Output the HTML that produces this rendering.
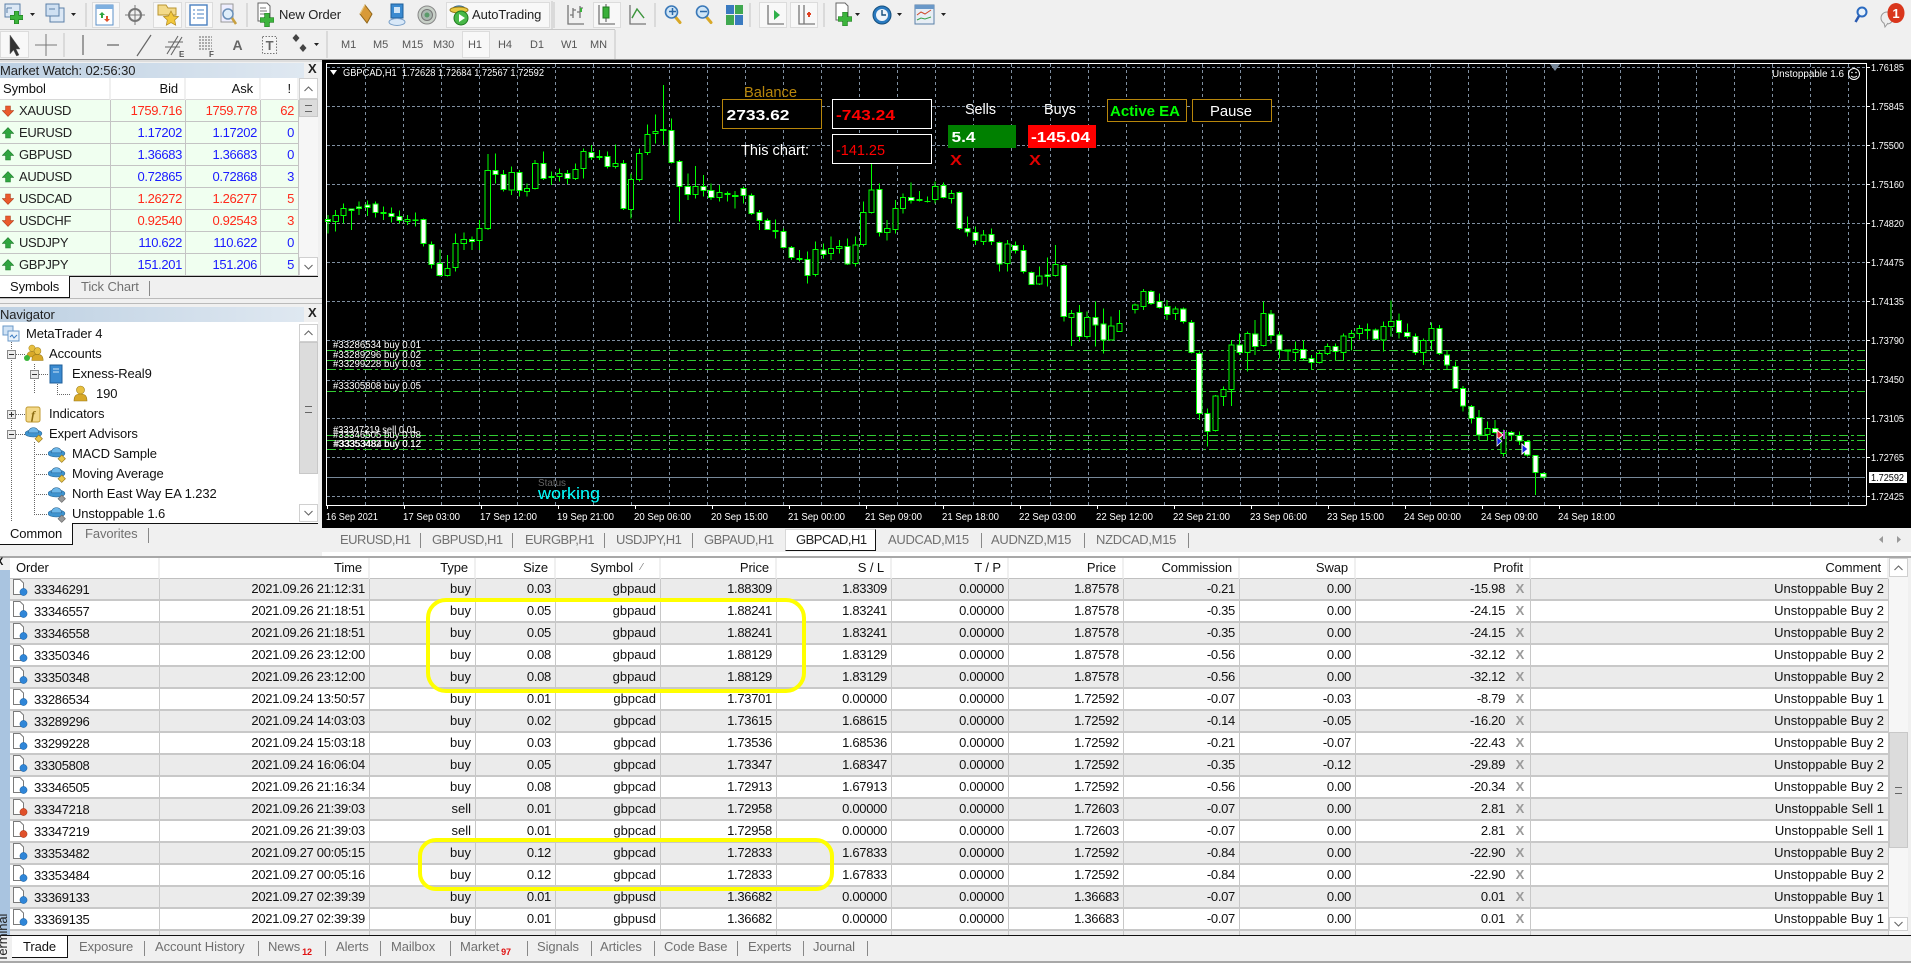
<!DOCTYPE html>
<html><head><meta charset="utf-8"><title>MetaTrader 4</title>
<style>
html,body{margin:0;padding:0}
body{width:1911px;height:963px;overflow:hidden;position:relative;background:#f0f0f0;font:13px/16px "Liberation Sans",sans-serif;letter-spacing:-.1px;color:#111}
.a{position:absolute;white-space:nowrap}
.t{position:absolute;white-space:nowrap;line-height:16px}
.g{color:#707070}
.ct{letter-spacing:-.5px}
.cm{letter-spacing:-.3px}
table{border-collapse:separate;border-spacing:0;table-layout:fixed;position:absolute}
td,th{box-sizing:border-box;padding:0;overflow:hidden;white-space:nowrap;font-weight:normal}
#mw{left:0;top:78px;width:299px}
#mw th{height:22px;text-align:right;padding-right:6px;background:#fff;border-right:2px solid #f0f0f0;border-bottom:1px solid #d8d8d8}
#mw th:first-child{text-align:left;padding-left:3px}
#mw td{height:22px;background:#f0fff0;border-right:1px solid #c4c4c4;border-bottom:1px solid #c4c4c4;text-align:right;padding-right:3px;color:#1a1aff;letter-spacing:-.35px}
#mw td:first-child{text-align:left;padding-left:2px;color:#222}
#mw td:last-child{padding-right:4px}
#mw tr.r td{color:#ff2a1a}
#mw tr.r td:first-child{color:#222}
#mw svg{width:12px;height:12px;vertical-align:-2px;margin-right:5px}
#ordw{position:absolute;left:10px;top:558px;width:1879px;height:377px;overflow:hidden;background:#fff}
#ord{left:0;top:0;width:1879px}
#ord th{height:21px;text-align:right;padding-right:6px;background:#fff;border-right:2px solid #f0f0f0;border-bottom:1px solid #c0c0c0}
#ord th:first-child{text-align:left;padding-left:6px}
#ord td{height:22px;text-align:right;padding-right:4px;border-right:1px solid #c8c8c8;border-bottom:2px solid #c8c8c8;background:#fff;letter-spacing:-.3px}
#ord tr:nth-child(even) td{background:#ebebeb}
#ord td:first-child{text-align:left;padding-left:3px}
#ord td:nth-child(3),#ord td:nth-child(5),#ord td:last-child{letter-spacing:0}
#ord td.p{padding-right:6px}
#ord td.p i{display:inline-block;width:19px;text-align:right;font:bold 13px "Liberation Sans",sans-serif;color:#9a9a9a}
#ord svg{width:15px;height:17px;vertical-align:-4px;margin-right:6px;position:relative;top:-2px}
.c path{vector-effect:non-scaling-stroke;stroke-width:1px;shape-rendering:crispEdges}
.tb{position:absolute;background:#f8f8f8;border:1px solid #dcdcdc;box-sizing:border-box}
.sb{position:absolute;background:#fff;border:1px solid #d0d0d0;box-sizing:border-box}
.sb svg{position:absolute;left:3px;top:50%;margin-top:-4px;width:11px;height:8px}
.th{position:absolute;background:#dcdcdc;border:1px solid #c8c8c8;box-sizing:border-box}
.ttl{position:absolute;left:0;width:304px;height:15px;background:linear-gradient(90deg,#bdd0e2,#dfe8f1);font-size:13px;line-height:15px;color:#222;white-space:nowrap}
.x{position:absolute;left:308px;font:bold 13px/14px "Liberation Sans",sans-serif;color:#222}
</style></head><body>
<svg width="0" height="0" style="position:absolute"><defs>
<symbol id="up" viewBox="0 0 12 12"><path d="M6 .6 11.6 6.4H8.4V11H3.6V6.4H.4z" fill="#2fa53f" stroke="#1c7a2a" stroke-width=".6"/></symbol>
<symbol id="dn" viewBox="0 0 12 12"><path d="M6 11.4 11.6 5.6H8.4V1H3.6V5.6H.4z" fill="#ea5a2c" stroke="#b03a18" stroke-width=".6"/></symbol>
<symbol id="pl" viewBox="0 0 12 12"><path d="M4 0h4v4h4v4H8v4H4V8H0V4h4z" fill="#3cb43c" stroke="#1d7a1d" stroke-width=".6"/></symbol>
<symbol id="db" viewBox="0 0 15 17"><path d="M.5 .5H7L10.5 4V15.5H.5z" fill="#fff" stroke="#7a7a7a"/><circle cx="10.5" cy="13" r="3.6" fill="#2f86d8" stroke="#1a5fa0" stroke-width=".5"/></symbol>
<symbol id="dr" viewBox="0 0 15 17"><path d="M.5 .5H7L10.5 4V15.5H.5z" fill="#fff" stroke="#7a7a7a"/><circle cx="10.5" cy="13" r="3.6" fill="#e0502a" stroke="#a03010" stroke-width=".5"/></symbol>
<symbol id="ea" viewBox="0 0 18 16"><ellipse cx="8" cy="7" rx="8" ry="3.4" fill="#3f94d0" stroke="#22608f" stroke-width=".5"/><path d="M3 6.5a5 5 0 0 1 10 0z" fill="#6db6e8" stroke="#22608f" stroke-width=".5"/><path d="M13 8.5l3.5 3.5-3.5 3.5L9.500 12z" fill="#e8c64a" stroke="#96761a" stroke-width=".6"/></symbol>
<symbol id="ea2" viewBox="0 0 18 16"><ellipse cx="8" cy="7" rx="8" ry="3.4" fill="#3f94d0" stroke="#22608f" stroke-width=".5"/><path d="M3 6.500a5 5 0 0 1 10 0z" fill="#6db6e8" stroke="#22608f" stroke-width=".5"/><path d="M13 8.500l3.500 3.500-3.500 3.500L9.500 12z" fill="#9a9a9a" stroke="#666" stroke-width=".6"/></symbol>
<symbol id="pr" viewBox="0 0 15 16"><circle cx="7.500" cy="4.500" r="4" fill="#e8c040" stroke="#9a7a18" stroke-width=".6"/><path d="M1 15.500c0-6 3-7 6.500-7s6.500 1 6.500 7z" fill="#d8a828" stroke="#9a7a18" stroke-width=".6"/></symbol>
<symbol id="mg" viewBox="0 0 18 20"><path d="M11 12l5 6" stroke="#d8a828" stroke-width="3" stroke-linecap="round"/><circle cx="7.500" cy="7.500" r="6" fill="#cfe5f7" stroke="#3a78b8" stroke-width="1.600"/></symbol>
<symbol id="cu" viewBox="0 0 11 8"><path d="M1.500 6L5.500 2l4 4" fill="none" stroke="#666" stroke-width="1.100"/></symbol>
<symbol id="cd" viewBox="0 0 11 8"><path d="M1.500 2L5.500 6l4-4" fill="none" stroke="#666" stroke-width="1.100"/></symbol>
</defs></svg>

<!-- toolbars -->
<div class="a" style="left:0;top:29px;width:615px;height:1px;background:#c8c8c8"></div>
<div class="a" style="left:0;top:59px;width:1911px;height:1px;background:#888"></div>
<div class="a" style="left:0;top:60px;width:1911px;height:2px;background:#ddd"></div>
<div class="tb" style="left:92px;top:2px;width:28px;height:26px"></div>
<div class="tb" style="left:153px;top:2px;width:29px;height:26px"></div>
<div class="tb" style="left:185px;top:2px;width:28px;height:26px"></div>
<div class="tb" style="left:446px;top:2px;width:104px;height:26px"></div>
<div class="tb" style="left:593px;top:2px;width:28px;height:26px"></div>
<div class="tb" style="left:759px;top:2px;width:28px;height:26px"></div>
<div class="tb" style="left:790px;top:2px;width:28px;height:26px"></div>
<div class="tb" style="left:0;top:31px;width:29px;height:27px"></div>
<div class="tb" style="left:462px;top:31px;width:28px;height:27px"></div>
<div class="a" style="left:279px;top:7px;font-size:13px;color:#222">New Order</div>
<div class="a" style="left:472px;top:7px;font-size:13px;color:#222">AutoTrading</div>
<div class="a" style="left:341px;top:37px;font-size:11px;color:#555">M1</div>
<div class="a" style="left:373px;top:37px;font-size:11px;color:#555">M5</div>
<div class="a" style="left:402px;top:37px;font-size:11px;color:#555">M15</div>
<div class="a" style="left:433px;top:37px;font-size:11px;color:#555">M30</div>
<div class="a" style="left:468px;top:37px;font-size:11px;color:#555">H1</div>
<div class="a" style="left:498px;top:37px;font-size:11px;color:#555">H4</div>
<div class="a" style="left:530px;top:37px;font-size:11px;color:#555">D1</div>
<div class="a" style="left:561px;top:37px;font-size:11px;color:#555">W1</div>
<div class="a" style="left:590px;top:37px;font-size:11px;color:#555">MN</div>
<svg class="a" style="left:0;top:0" width="1911" height="60">
<path d="M86 3V27M247 3V27M554 2V28M655 3V27M750 3V27M824 3V27M64 33V57M327 31V58M615 30V59M552 1V29" stroke="#c4c4c4" fill="none"/>
<path d="M30 13h5l-2.500 3zM71 13h5l-2.500 3zM855 13h5l-2.500 3zM897 13h5l-2.500 3zM941 13h5l-2.500 3zM314 43h5l-2.500 3z" fill="#222"/>
<!-- new chart -->
<rect x="5" y="4" width="15" height="13" fill="#dce8f5" stroke="#5b7fa8"/><path d="M7 8h5M7 8v5" stroke="#5b7fa8"/><use href="#pl" x="10" y="11" width="13" height="13"/>
<rect x="50" y="8" width="14" height="14" fill="#dce8f5" stroke="#5b7fa8"/><rect x="46" y="4" width="13" height="12" fill="#cfe0f2" stroke="#5b7fa8"/><path d="M49 9h6" stroke="#5b7fa8"/>
<!-- market watch -->
<rect x="96" y="5" width="17" height="20" fill="#fff" stroke="#5b90c8"/><rect x="96" y="5" width="17" height="4" fill="#7fb0e0"/><path d="M102 12l3 3h-2v3h-2v-3h-2z" fill="#2fa53f"/><path d="M107 22l3-3h-2v-3h-2v3h-2z" fill="#e0502a"/>
<circle cx="135" cy="15" r="6" fill="none" stroke="#777" stroke-width="2"/><path d="M135 5V25M125 15H145" stroke="#777"/>
<path d="M158 5h8l2 3h8v7h-18z" fill="#f3da8a" stroke="#b89430"/><path d="M171 11l2.500 5 5 .5-3.800 3.500 1 5.200-4.700-2.600-4.700 2.600 1-5.200-3.800-3.500 5-.5z" fill="#f2c83c" stroke="#b08820" stroke-width=".7"/>
<rect x="190" y="5" width="17" height="20" fill="#fff" stroke="#4a80c0" stroke-width="1.400"/><path d="M193 10h2M197 10h7M193 14h2M197 14h7M193 18h2M197 18h7" stroke="#4a80c0"/>
<rect x="221" y="4" width="12" height="18" fill="#eef" stroke="#999"/><circle cx="228" cy="14" r="5" fill="#dfeefa" stroke="#6a90b8" stroke-width="1.500"/><path d="M232 18l4 6" stroke="#c8a040" stroke-width="2.500"/>
<!-- new order -->
<path d="M258 3h9l3 3v15h-12z" fill="#fff" stroke="#666"/><path d="M260 8h6M260 11h7M260 14h7" stroke="#777"/><use href="#pl" x="260" y="13" width="14" height="14"/>
<path d="M365 5l7 9-5 9-7-9z" fill="#d89a38" stroke="#8e6418"/><path d="M360 14l5-9" stroke="#f0cc80"/>
<path d="M391 4h12v14h-12z" fill="#3a8ad0" stroke="#1f5f9a"/><rect x="394" y="7" width="6" height="6" fill="#cfe5f7"/><ellipse cx="397" cy="22" rx="8" ry="3.500" fill="#d8e8f8" stroke="#7aa0c8"/>
<circle cx="427" cy="15" r="9" fill="#c8d0c8" stroke="#888"/><circle cx="427" cy="15" r="5.500" fill="#aab8b0" stroke="#777"/><circle cx="427" cy="15" r="2.500" fill="#5a9a6a"/>
<!-- autotrading -->
<path d="M452 9a8 6 0 0 1 14 0z" fill="#6db6e8" stroke="#2a6898"/><ellipse cx="459" cy="10" rx="9" ry="3" fill="#e8c840" stroke="#9a7a18"/><circle cx="461" cy="18" r="7" fill="#48b848" stroke="#1f7a1f"/><path d="M459 14l6 4-6 4z" fill="#fff"/>
<!-- chart types -->
<path d="M568 5V24H584M573 8V18M570 15h3M573 10h3M580 6V18M577 12h3M580 8h3" fill="none" stroke="#777" stroke-width="1.300"/><path d="M580 8h2V12h-2z" fill="#3ab03a"/>
<path d="M599 5V24H615M606 4V22" fill="none" stroke="#777" stroke-width="1.300"/><rect x="603" y="7" width="6" height="11" fill="#3ab03a" stroke="#1f7a1f"/>
<path d="M630 5V24H646M632 18L637 9l7 9" fill="none" stroke="#777" stroke-width="1.300"/><path d="M632 18L637 9l7 9" fill="none" stroke="#3a9a3a" stroke-width="1.300"/>
<use href="#mg" x="664" y="4" width="18" height="21"/><path d="M669 11.500h7M672.500 8v7" stroke="#2a68a8" stroke-width="1.500"/>
<use href="#mg" x="695" y="4" width="18" height="21"/><path d="M700 11.500h7" stroke="#2a68a8" stroke-width="1.500"/>
<rect x="726" y="5" width="8" height="9" fill="#3a7ac0"/><rect x="735" y="5" width="8" height="9" fill="#40a850"/><rect x="726" y="15" width="8" height="10" fill="#40a850"/><rect x="735" y="15" width="8" height="10" fill="#3a7ac0"/>
<path d="M768 5V24H784" fill="none" stroke="#777" stroke-width="1.300"/><path d="M774 10l6 5-6 5z" fill="#2fb04a"/>
<path d="M799 5V24H815M804 5V24" fill="none" stroke="#777" stroke-width="1.300"/><path d="M807 14h4M809 12v5" stroke="#e04020" stroke-width="2"/>
<!-- right -->
<path d="M836 3h9l3 3v14h-12z" fill="#fff" stroke="#666"/><use href="#pl" x="838" y="12" width="14" height="14"/>
<circle cx="882" cy="15" r="9" fill="#2a7ac0" stroke="#16507e"/><circle cx="882" cy="15" r="6" fill="#eef4fa"/><path d="M882 10v5h4" stroke="#16507e" stroke-width="1.400" fill="none"/>
<rect x="915" y="5" width="19" height="19" fill="#e8eef5" stroke="#5a80a8"/><rect x="915" y="5" width="19" height="4" fill="#6a98c8"/><path d="M917 15l4-3 4 2 6-4" fill="none" stroke="#d04a2a"/><path d="M917 20l4-2 4 1 6-2" fill="none" stroke="#3aa048"/>
<!-- row 2 -->
<path d="M10 35V54L13.500 50l3 6 2.500-1-3-6h4z" fill="#333" stroke="#666" stroke-width=".5"/>
<path d="M46 34V56M35 45H57" stroke="#777"/>
<path d="M83 35V55M107 45H119M137 56L151 35" stroke="#666" stroke-width="1.200"/>
<path d="M167 54L178 36M171 55L182 37M165 47H180M168 42H183" stroke="#666" stroke-width="1.100"/><path d="M199 37h13M199 40h13M199 43h13M199 46h13M199 49h13" stroke="#666" stroke-dasharray="2 1"/>
<text x="179" y="57" font-family="Liberation Sans" font-weight="bold" font-size="8" fill="#555">E</text>
<text x="209" y="57" font-family="Liberation Sans" font-weight="bold" font-size="8" fill="#555">F</text>
<text x="237.500" y="50" text-anchor="middle" font-family="Liberation Sans" font-weight="bold" font-size="14" fill="#666">A</text>
<rect x="262.500" y="36.500" width="14" height="17" fill="#f4f4f4" stroke="#777" stroke-dasharray="1.500 1.500"/>
<text x="269.500" y="50" text-anchor="middle" font-family="Liberation Sans" font-weight="bold" font-size="13" fill="#666">T</text>
<path d="M296 34l3.500 4-3.500 4-3.500-4zM303 44l3.500 4-3.500 4-3.500-4z" fill="#444"/>
<!-- search / notify -->
<circle cx="1862" cy="12" r="4.500" fill="#e8f2fb" stroke="#2a6ac0" stroke-width="2"/><path d="M1859 16l-3.500 6" stroke="#2a5ab0" stroke-width="2.500"/>
<circle cx="1887" cy="18" r="6" fill="#eee" stroke="#999"/><path d="M1884 23l1 4 3-4" fill="#eee" stroke="#999"/>
<ellipse cx="1896" cy="13" rx="8.500" ry="10" fill="#d9361c"/>
<text x="1896" y="18" text-anchor="middle" font-family="Liberation Sans" font-weight="bold" font-size="13" fill="#fff">1</text>
</svg>

<!-- market watch -->
<div class="ttl" style="top:63px">Market Watch: 02:56:30</div><div class="x" style="top:62px">X</div>
<table id="mw"><colgroup><col style="width:111px"><col style="width:75px"><col style="width:75px"><col style="width:38px"></colgroup>
<tr><th>Symbol</th><th>Bid</th><th>Ask</th><th>!</th></tr>
<tr class="r"><td><svg><use href="#dn"/></svg>XAUUSD</td><td>1759.716</td><td>1759.778</td><td>62</td></tr>
<tr><td><svg><use href="#up"/></svg>EURUSD</td><td>1.17202</td><td>1.17202</td><td>0</td></tr>
<tr><td><svg><use href="#up"/></svg>GBPUSD</td><td>1.36683</td><td>1.36683</td><td>0</td></tr>
<tr><td><svg><use href="#up"/></svg>AUDUSD</td><td>0.72865</td><td>0.72868</td><td>3</td></tr>
<tr class="r"><td><svg><use href="#dn"/></svg>USDCAD</td><td>1.26272</td><td>1.26277</td><td>5</td></tr>
<tr class="r"><td><svg><use href="#dn"/></svg>USDCHF</td><td>0.92540</td><td>0.92543</td><td>3</td></tr>
<tr><td><svg><use href="#up"/></svg>USDJPY</td><td>110.622</td><td>110.622</td><td>0</td></tr>
<tr><td><svg><use href="#up"/></svg>GBPJPY</td><td>151.201</td><td>151.206</td><td>5</td></tr>
</table>
<div class="a" style="left:299px;top:78px;width:19px;height:198px;background:#f6f6f6"></div>
<div class="sb" style="left:299px;top:78px;width:19px;height:21px"><svg><use href="#cu"/></svg></div>
<div class="th" style="left:299px;top:99px;width:19px;height:18px"></div>
<div class="a" style="left:305px;top:105px;width:7px;height:5px;border-top:1px solid #666;border-bottom:1px solid #666"></div>
<div class="sb" style="left:299px;top:257px;width:19px;height:19px"><svg><use href="#cd"/></svg></div>
<div class="a" style="left:0;top:298px;width:322px;height:1px;background:#bbb"></div>
<div class="a" style="left:70px;top:276px;width:248px;height:1px;background:#111"></div>
<div class="a" style="left:0;top:276px;width:70px;height:22px;background:#fff;border-right:1px solid #111;border-bottom:1px solid #111;box-sizing:border-box"></div>
<div class="t" style="left:10px;top:279px">Symbols</div>
<div class="t g" style="left:81px;top:279px">Tick Chart</div>
<div class="a" style="left:149px;top:281px;width:1px;height:15px;background:#888"></div>
<div class="a" style="left:0;top:303px;width:322px;height:1px;background:#bbb"></div>

<!-- navigator -->
<div class="ttl" style="top:307px">Navigator</div><div class="x" style="top:306px">X</div>
<div class="a" style="left:0;top:322px;width:299px;height:201px;background:#fff"></div>
<div class="a" style="left:299px;top:322px;width:19px;height:201px;background:#fff"></div>
<div class="sb" style="left:299px;top:324px;width:19px;height:18px"><svg><use href="#cu"/></svg></div>
<div class="th" style="left:299px;top:342px;width:19px;height:132px"></div>
<div class="a" style="left:305px;top:406px;width:7px;height:5px;border-top:1px solid #666;border-bottom:1px solid #666"></div>
<div class="sb" style="left:299px;top:504px;width:19px;height:18px"><svg><use href="#cd"/></svg></div>
<svg class="a" style="left:0;top:322px" width="299" height="201">
<g stroke="#666" stroke-dasharray="1 1" fill="none"><path d="M11.500 20V200M34.500 42V72M57.500 62V72M34.500 120V192M16 32.500H25M39 52.500H48M57 72.500H70M16 92.500H25M16 112.500H25M34 132.500H48M34 152.500H48M34 172.500H48M34 192.500H48"/></g>
<g fill="#ececec" stroke="#888"><rect x="7.500" y="28.500" width="8" height="8"/><rect x="30.500" y="48.500" width="8" height="8"/><rect x="7.500" y="88.500" width="8" height="8"/><rect x="7.500" y="108.500" width="8" height="8"/></g>
<path d="M9 32.500h5M32 52.500h5M9 92.500h5M11.500 90v5M9 112.500h5" stroke="#333"/>
<rect x="3" y="4" width="10" height="9" fill="#cfe2f5" stroke="#6a98c8"/><rect x="8" y="9" width="11" height="10" fill="#e8f2fb" stroke="#6a98c8"/><path d="M10 15l2-2 2 3 3-3" fill="none" stroke="#3a7ac0"/>
<use href="#pr" x="26" y="22" width="12" height="14"/><use href="#pr" x="31" y="24" width="13" height="16"/><circle cx="27" cy="36" r="3" fill="#3ab53a"/>
<rect x="50" y="43" width="12" height="18" fill="#3a8ad0" stroke="#1f5f9a"/><path d="M53 47h6M53 50h6" stroke="#cfe5f7"/>
<use href="#pr" x="73" y="63" width="15" height="17"/>
<rect x="26" y="85" width="14" height="15" rx="2" fill="#f4d98a" stroke="#c09a30"/><text x="33" y="97" text-anchor="middle" font-family="Liberation Serif" font-style="italic" font-weight="bold" font-size="12" fill="#8a6a10">f</text>
<use href="#ea" x="25" y="104" width="19" height="17"/><use href="#ea" x="48" y="124" width="19" height="17"/><use href="#ea" x="48" y="144" width="19" height="17"/><use href="#ea2" x="48" y="164" width="19" height="17"/><use href="#ea2" x="48" y="184" width="19" height="17"/>
</svg>
<div class="t" style="left:26px;top:326px">MetaTrader 4</div>
<div class="t" style="left:49px;top:346px">Accounts</div>
<div class="t" style="left:72px;top:366px">Exness-Real9</div>
<div class="t" style="left:96px;top:386px">190</div>
<div class="t" style="left:49px;top:406px">Indicators</div>
<div class="t" style="left:49px;top:426px">Expert Advisors</div>
<div class="t" style="left:72px;top:446px">MACD Sample</div>
<div class="t" style="left:72px;top:466px">Moving Average</div>
<div class="t" style="left:72px;top:486px">North East Way EA 1.232</div>
<div class="t" style="left:72px;top:506px">Unstoppable 1.6</div>
<div class="a" style="left:73px;top:523px;width:245px;height:1px;background:#111"></div>
<div class="a" style="left:0;top:523px;width:73px;height:22px;background:#fff;border-right:1px solid #111;border-bottom:1px solid #111;box-sizing:border-box"></div>
<div class="t" style="left:10px;top:526px">Common</div>
<div class="t g" style="left:85px;top:526px">Favorites</div>
<div class="a" style="left:148px;top:528px;width:1px;height:15px;background:#888"></div>

<!-- chart -->
<svg class="a" style="left:322px;top:60px;display:block" width="1589" height="468" viewBox="322 60 1589 468">
<rect x="322" y="60" width="1589" height="468" fill="#000"/>
<path d="M327 63.500H1866.500M326.500 63V505.500H1866M1866.500 63V505.500" stroke="#fff" fill="none"/>
<path d="M327 67.500H1865M327 106.500H1865M327 145.500H1865M327 184.500H1865M327 223.500H1865M327 262.500H1865M327 301.500H1865M327 340.500H1865M327 380.500H1865M327 418.500H1865M327 457.500H1865M327 496.500H1865" stroke="#7f8fa0" stroke-dasharray="3 2" fill="none"/>
<path d="M365.500 64V505M403.500 64V505M441.500 64V505M479.500 64V505M517.500 64V505M555.500 64V505M593.500 64V505M631.500 64V505M669.500 64V505M707.500 64V505M745.500 64V505M783.500 64V505M821.500 64V505M859.500 64V505M897.500 64V505M935.500 64V505M973.500 64V505M1011.500 64V505M1050.500 64V505M1088.500 64V505M1126.500 64V505M1164.500 64V505M1202.500 64V505M1240.500 64V505M1278.500 64V505M1316.500 64V505M1354.500 64V505M1392.500 64V505M1430.500 64V505M1468.500 64V505M1506.500 64V505M1544.500 64V505M1582.500 64V505M1620.500 64V505M1658.500 64V505M1696.500 64V505M1734.500 64V505M1772.500 64V505M1810.500 64V505M1848.500 64V505" stroke="#7f8fa0" stroke-dasharray="3 3" fill="none"/>
<path d="M327 350.500H1865M327 360.500H1865M327 369.500H1865M327 391.500H1865M327 435.500H1865M327 440.500H1865M327 449.500H1865" stroke="#32cd32" stroke-dasharray="9 3 3 3" fill="none"/>
<path d="M327 477.500H1865" stroke="#778899"/>
<path d="M1866 67.500h4M1866 106.500h4M1866 145.500h4M1866 184.500h4M1866 223.500h4M1866 262.500h4M1866 301.500h4M1866 340.500h4M1866 380.500h4M1866 418.500h4M1866 457.500h4M1866 496.500h4M327.500 505v4M404.500 505v4M481.500 505v4M558.500 505v4M635.500 505v4M712.500 505v4M789.500 505v4M866.500 505v4M943.500 505v4M1020.500 505v4M1097.500 505v4M1174.500 505v4M1251.500 505v4M1328.500 505v4M1405.500 505v4M1482.500 505v4M1559.500 505v4" stroke="#fff"/>
<path d="M1550 64h10l-5 7z" fill="#778899"/>

<g class="c" transform="translate(325 60) scale(.5102 .33333)">
<path fill="none" stroke="#0f0" d="M6 465V520M21 450V515M36 430V490M52 445V510M67 425V465M83 422V468M99 425V472M115 440V480M130 442V488M146 452V490M162 465V495M177 457V500M193 475V560M209 545V625M225 568V650M240 585V650M256 520V635M272 518V570M288 530V570M303 480V570M319 282V510M334 280V370M350 330V395M366 320V405M381 330V410M396 370V410M412 300V388M428 275V360M444 335V375M460 325V365M475 330V372M491 310V360M507 265V355M522 255V300M538 270V300M554 275V325M569 253V325M585 300V450M600 340V475M616 265V365M632 193V285M648 163V250M663 75V255M679 175V310M695 300V485M711 340V420M726 318V415M742 345V410M757 370V420M773 375V425M789 395V425M804 393V445M820 380V430M836 400V465M852 450V510M867 475V510M883 478V535M899 505V565M914 558V600M930 570V605M946 575V670M961 545V650M977 550V595M992 530V600M1008 540V580M1024 535V615M1040 530V620M1055 425V560M1071 310V460M1087 370V530M1102 480V542M1118 420V520M1133 400V460M1149 368V430M1165 393V425M1181 410V428M1196 365V430M1212 368V415M1228 390V430M1244 395V510M1259 470V530M1275 500V555M1291 510V555M1306 505V555M1322 545V635M1338 540V635M1353 545V580M1369 555V640M1385 635V675M1400 620V675M1416 592V680M1432 555V650M1448 612V785M1463 750V858M1479 735V845M1494 755V835M1510 725V860M1526 745V880M1541 770V840M1557 750V815"/>
<path fill="#000" stroke="#0f0" d="M21 466m-5 0h10V485h-10zM36 445m-5 0h10V467h-10zM162 478m-5 0h10V485h-10zM240 625m-5 0h10V647h-10zM256 550m-5 0h10V623h-10zM272 538m-5 0h10V551h-10zM303 505m-5 0h10V542h-10zM319 331m-5 0h10V505h-10zM366 337m-5 0h10V390h-10zM396 385m-5 0h10V395h-10zM412 310m-5 0h10V385h-10zM460 340m-5 0h10V350h-10zM491 328m-5 0h10V356h-10zM507 274m-5 0h10V325h-10zM569 310m-5 0h10V320h-10zM600 358m-5 0h10V448h-10zM616 280m-5 0h10V358h-10zM632 223m-5 0h10V277h-10zM648 214m-5 0h10V220h-10zM726 379m-5 0h10V404h-10zM773 397m-5 0h10V413h-10zM961 568m-5 0h10V643h-10zM992 565m-5 0h10V581h-10zM1008 560m-5 0h10V565h-10zM1040 555m-5 0h10V610h-10zM1055 457m-5 0h10V553h-10zM1071 390m-5 0h10V457h-10zM1102 505m-5 0h10V517h-10zM1118 445m-5 0h10V508h-10zM1133 412m-5 0h10V445h-10zM1196 380m-5 0h10V418h-10zM1228 400m-5 0h10V415h-10zM1291 525m-5 0h10V544h-10zM1338 552m-5 0h10V610h-10zM1400 648m-5 0h10V672h-10zM1432 613m-5 0h10V646h-10zM1463 760m-5 0h10V772h-10zM1494 772m-5 0h10V830h-10zM1541 798m-5 0h10V840h-10zM1557 790m-5 0h10V815h-10z"/>
<path fill="#fff" stroke="#0f0" d="M6 478m-5 0h10V485h-10zM52 447m-5 0h10V452h-10zM67 441m-5 0h10V445h-10zM83 435m-5 0h10V442h-10zM99 432m-5 0h10V458h-10zM115 457m-5 0h10V461h-10zM130 460m-5 0h10V470h-10zM146 470m-5 0h10V482h-10zM177 480m-5 0h10V482h-10zM193 478m-5 0h10V550h-10zM209 553m-5 0h10V613h-10zM225 610m-5 0h10V647h-10zM288 539m-5 0h10V544h-10zM334 331m-5 0h10V344h-10zM350 344m-5 0h10V388h-10zM381 337m-5 0h10V392h-10zM428 310m-5 0h10V355h-10zM444 349m-5 0h10V352h-10zM475 340m-5 0h10V356h-10zM522 277m-5 0h10V293h-10zM538 289m-5 0h10V293h-10zM554 289m-5 0h10V319h-10zM585 310m-5 0h10V445h-10zM663 208m-5 0h10V212h-10zM679 211m-5 0h10V307h-10zM695 304m-5 0h10V379h-10zM711 379m-5 0h10V404h-10zM742 379m-5 0h10V391h-10zM757 391m-5 0h10V412h-10zM789 400m-5 0h10V403h-10zM804 406m-5 0h10V409h-10zM820 385m-5 0h10V406h-10zM836 406m-5 0h10V460h-10zM852 458m-5 0h10V482h-10zM867 482m-5 0h10V508h-10zM883 511m-5 0h10V514h-10zM899 514m-5 0h10V562h-10zM914 562m-5 0h10V592h-10zM930 595m-5 0h10V598h-10zM946 598m-5 0h10V646h-10zM977 570m-5 0h10V583h-10zM1024 560m-5 0h10V612h-10zM1087 388m-5 0h10V518h-10zM1149 412m-5 0h10V421h-10zM1165 418m-5 0h10V422h-10zM1181 424m-5 0h10V425h-10zM1212 376m-5 0h10V412h-10zM1244 397m-5 0h10V505h-10zM1259 505m-5 0h10V516h-10zM1275 517m-5 0h10V541h-10zM1306 523m-5 0h10V544h-10zM1322 547m-5 0h10V612h-10zM1353 556m-5 0h10V571h-10zM1369 571m-5 0h10V634h-10zM1385 638m-5 0h10V673h-10zM1416 645m-5 0h10V650h-10zM1448 617m-5 0h10V770h-10zM1479 758m-5 0h10V830h-10zM1510 772m-5 0h10V795h-10zM1526 792m-5 0h10V840h-10z"/>
</g>
<g class="c" transform="translate(1100 300) scale(.5173 .33333)">
<path fill="none" stroke="#0f0" d="M68 10V40M84 -33V30M99 -30V15M115 -20V25M130 0V60M146 20V60M161 22V70M177 60V160M192 155V360M208 325V440M223 285V395M239 260V318M254 120V318M270 100V165M285 95V215M300 60V165M316 5V140M331 30V130M347 95V175M363 150V180M378 125V185M393 120V180M409 165V210M424 155V190M440 130V165M455 130V180M471 100V180M486 90V152M502 75V118M517 70V118M533 85V120M548 65V155M563 2V110M578 40V115M594 70V115M610 100V165M625 115V195M641 68V150M656 75V165M671 150V210M687 185V265M702 258V335M718 315V370M733 330V420M749 365V420M764 360V400M780 388V470M795 393V420M811 395V435M826 420V470M842 465V585M857 518V535"/>
<path fill="#000" stroke="#0f0" d="M68 15m-5 0h10V28h-10zM84 -25m-5 0h10V20h-10zM146 27m-5 0h10V41h-10zM223 288m-5 0h10V392h-10zM239 268m-5 0h10V290h-10zM254 135m-5 0h10V268h-10zM285 100m-5 0h10V158h-10zM316 40m-5 0h10V137h-10zM378 148m-5 0h10V158h-10zM424 160m-5 0h10V187h-10zM440 140m-5 0h10V160h-10zM471 108m-5 0h10V158h-10zM486 100m-5 0h10V113h-10zM502 85m-5 0h10V100h-10zM548 80m-5 0h10V120h-10zM563 65m-5 0h10V80h-10zM625 122m-5 0h10V157h-10zM641 85m-5 0h10V122h-10zM749 385m-5 0h10V403h-10zM780 398m-5 0h10V460h-10z"/>
<path fill="#fff" stroke="#0f0" d="M99 -25m-5 0h10V10h-10zM115 5m-5 0h10V22h-10zM130 19m-5 0h10V43h-10zM161 27m-5 0h10V65h-10zM177 67m-5 0h10V157h-10zM192 160m-5 0h10V340h-10zM208 340m-5 0h10V395h-10zM270 135m-5 0h10V157h-10zM300 102m-5 0h10V140h-10zM331 42m-5 0h10V107h-10zM347 105m-5 0h10V150h-10zM363 150m-5 0h10V153h-10zM393 148m-5 0h10V175h-10zM409 175m-5 0h10V187h-10zM455 140m-5 0h10V155h-10zM517 88m-5 0h10V92h-10zM533 90m-5 0h10V117h-10zM578 62m-5 0h10V97h-10zM594 97m-5 0h10V109h-10zM610 110m-5 0h10V157h-10zM656 86m-5 0h10V160h-10zM671 165m-5 0h10V195h-10zM687 200m-5 0h10V265h-10zM702 265m-5 0h10V318h-10zM718 320m-5 0h10V355h-10zM733 353m-5 0h10V405h-10zM764 385m-5 0h10V398h-10zM795 397m-5 0h10V405h-10zM811 407m-5 0h10V423h-10zM826 425m-5 0h10V465h-10zM842 467m-5 0h10V518h-10zM857 521m-5 0h10V531h-10z"/>
</g>
<!-- trade markers -->
<path d="M1497 430l6 5-6 5z" fill="#e8122c" stroke="#fff"/><path d="M1504 430v9" stroke="#b050c8" stroke-width="2"/><path d="M1497 437l5 4-5 5z" fill="#1020e0" stroke="#fff" stroke-width=".7"/>
<path d="M1522 444l6 5-6 5z" fill="#1020e0" stroke="#fff"/>

<g font-family="Liberation Sans" font-size="10" fill="#fff" letter-spacing="0">
<path d="M330 70h7l-3.500 5z" fill="#fff"/>
<text x="343" y="76" textLength="201" lengthAdjust="spacingAndGlyphs" xml:space="preserve">GBPCAD,H1  1.72628 1.72684 1.72567 1.72592</text>
<text x="1772" y="77" textLength="72" lengthAdjust="spacingAndGlyphs">Unstoppable 1.6</text>
<circle cx="1854" cy="74" r="5.500" fill="none" stroke="#fff"/><circle cx="1852" cy="72.500" r=".8"/><circle cx="1856" cy="72.500" r=".8"/><path d="M1851 76q3 2.500 6 0" fill="none" stroke="#fff"/>
<g text-anchor="start">
<text x="333" y="348" textLength="88" lengthAdjust="spacingAndGlyphs">#33286534 buy 0.01</text>
<text x="333" y="358" textLength="88" lengthAdjust="spacingAndGlyphs">#33289296 buy 0.02</text>
<text x="333" y="367" textLength="88" lengthAdjust="spacingAndGlyphs">#33299228 buy 0.03</text>
<text x="333" y="389" textLength="88" lengthAdjust="spacingAndGlyphs">#33305808 buy 0.05</text>
<text x="333" y="433" textLength="84" lengthAdjust="spacingAndGlyphs">#33347219 sell 0.01</text>
<text x="333" y="438" textLength="88" lengthAdjust="spacingAndGlyphs">#33346505 buy 0.08</text>
<text x="333" y="447" textLength="88" lengthAdjust="spacingAndGlyphs">#33353482 buy 0.12</text>
<text x="334" y="447" textLength="87" lengthAdjust="spacingAndGlyphs">#33353484 buy 0.12</text>
</g>
<g>
<text x="1871" y="71" textLength="33" lengthAdjust="spacingAndGlyphs">1.76185</text>
<text x="1871" y="110" textLength="33" lengthAdjust="spacingAndGlyphs">1.75845</text>
<text x="1871" y="149" textLength="33" lengthAdjust="spacingAndGlyphs">1.75500</text>
<text x="1871" y="188" textLength="33" lengthAdjust="spacingAndGlyphs">1.75160</text>
<text x="1871" y="227" textLength="33" lengthAdjust="spacingAndGlyphs">1.74820</text>
<text x="1871" y="266" textLength="33" lengthAdjust="spacingAndGlyphs">1.74475</text>
<text x="1871" y="305" textLength="33" lengthAdjust="spacingAndGlyphs">1.74135</text>
<text x="1871" y="344" textLength="33" lengthAdjust="spacingAndGlyphs">1.73790</text>
<text x="1871" y="383" textLength="33" lengthAdjust="spacingAndGlyphs">1.73450</text>
<text x="1871" y="422" textLength="33" lengthAdjust="spacingAndGlyphs">1.73105</text>
<text x="1871" y="461" textLength="33" lengthAdjust="spacingAndGlyphs">1.72765</text>
<text x="1871" y="500" textLength="33" lengthAdjust="spacingAndGlyphs">1.72425</text>
</g>
<rect x="1869" y="472" width="38" height="11" fill="#fff"/>
<text x="1871" y="481" fill="#000" textLength="33" lengthAdjust="spacingAndGlyphs">1.72592</text>
<g>
<text x="326" y="520" textLength="52" lengthAdjust="spacingAndGlyphs">16 Sep 2021</text>
<text x="403" y="520" textLength="57" lengthAdjust="spacingAndGlyphs">17 Sep 03:00</text>
<text x="480" y="520" textLength="57" lengthAdjust="spacingAndGlyphs">17 Sep 12:00</text>
<text x="557" y="520" textLength="57" lengthAdjust="spacingAndGlyphs">19 Sep 21:00</text>
<text x="634" y="520" textLength="57" lengthAdjust="spacingAndGlyphs">20 Sep 06:00</text>
<text x="711" y="520" textLength="57" lengthAdjust="spacingAndGlyphs">20 Sep 15:00</text>
<text x="788" y="520" textLength="57" lengthAdjust="spacingAndGlyphs">21 Sep 00:00</text>
<text x="865" y="520" textLength="57" lengthAdjust="spacingAndGlyphs">21 Sep 09:00</text>
<text x="942" y="520" textLength="57" lengthAdjust="spacingAndGlyphs">21 Sep 18:00</text>
<text x="1019" y="520" textLength="57" lengthAdjust="spacingAndGlyphs">22 Sep 03:00</text>
<text x="1096" y="520" textLength="57" lengthAdjust="spacingAndGlyphs">22 Sep 12:00</text>
<text x="1173" y="520" textLength="57" lengthAdjust="spacingAndGlyphs">22 Sep 21:00</text>
<text x="1250" y="520" textLength="57" lengthAdjust="spacingAndGlyphs">23 Sep 06:00</text>
<text x="1327" y="520" textLength="57" lengthAdjust="spacingAndGlyphs">23 Sep 15:00</text>
<text x="1404" y="520" textLength="57" lengthAdjust="spacingAndGlyphs">24 Sep 00:00</text>
<text x="1481" y="520" textLength="57" lengthAdjust="spacingAndGlyphs">24 Sep 09:00</text>
<text x="1558" y="520" textLength="57" lengthAdjust="spacingAndGlyphs">24 Sep 18:00</text>
</g>
<text x="538" y="486" fill="#666" textLength="28" lengthAdjust="spacingAndGlyphs">Status</text>
<text x="538" y="499" fill="#0ff" font-size="17" textLength="62" lengthAdjust="spacingAndGlyphs">working</text>
</g>

<!-- EA overlay -->
<g font-family="Liberation Sans" letter-spacing="0">
<text x="744" y="97" font-size="15" fill="#b8860b" textLength="53" lengthAdjust="spacingAndGlyphs">Balance</text>
<rect x="722.500" y="99.500" width="99" height="29" fill="#000" stroke="#b8860b"/>
<text x="726.500" y="120" font-size="15" font-weight="bold" fill="#fff" textLength="63" lengthAdjust="spacingAndGlyphs">2733.62</text>
<rect x="832.500" y="99.500" width="99" height="29" fill="#000" stroke="#fff"/>
<text x="836" y="120" font-size="15" font-weight="bold" fill="#f00" textLength="59" lengthAdjust="spacingAndGlyphs">-743.24</text>
<text x="965" y="114" font-size="15" fill="#fff" textLength="31" lengthAdjust="spacingAndGlyphs">Sells</text>
<text x="1044" y="114" font-size="15" fill="#fff" textLength="32" lengthAdjust="spacingAndGlyphs">Buys</text>
<rect x="948" y="125" width="68" height="23" fill="#008000"/>
<text x="951.500" y="142" font-size="15" font-weight="bold" fill="#fff" textLength="24" lengthAdjust="spacingAndGlyphs">5.4</text>
<rect x="1028" y="125" width="68" height="23" fill="#f00"/>
<text x="1031" y="142" font-size="15" font-weight="bold" fill="#fff" textLength="59" lengthAdjust="spacingAndGlyphs">-145.04</text>
<text x="950" y="165" font-size="15" font-weight="bold" fill="#e00000" textLength="12" lengthAdjust="spacingAndGlyphs">X</text>
<text x="1029" y="165" font-size="15" font-weight="bold" fill="#e00000" textLength="12" lengthAdjust="spacingAndGlyphs">X</text>
<text x="741" y="155" font-size="15" fill="#fff" textLength="68" lengthAdjust="spacingAndGlyphs">This chart:</text>
<rect x="832.500" y="134.500" width="99" height="29" fill="#000" stroke="#fff"/>
<text x="836" y="155" font-size="15" fill="#f00" textLength="49" lengthAdjust="spacingAndGlyphs">-141.25</text>
<rect x="1107.500" y="99.500" width="79" height="22" fill="#000" stroke="#b8860b"/>
<text x="1110" y="116" font-size="15" font-weight="bold" fill="#0f0" textLength="70" lengthAdjust="spacingAndGlyphs">Active EA</text>
<rect x="1192.500" y="99.500" width="79" height="22" fill="#000" stroke="#b8860b"/>
<text x="1210" y="116" font-size="15" fill="#fff" textLength="42" lengthAdjust="spacingAndGlyphs">Pause</text>
</g>
</svg>

<!-- chart tabs -->
<div class="a" style="left:322px;top:528px;width:1589px;height:24px;background:#f0f0f0"></div>
<div class="a" style="left:322px;top:552px;width:1589px;height:4px;background:#fff"></div>
<div class="a" style="left:0;top:545px;width:322px;height:11px;background:#f0f0f0"></div>
<div class="a" style="left:785px;top:529px;width:91px;height:22px;background:#fff;border:1px solid #d8d8d8;border-right:1px solid #111;border-bottom:1px solid #111;box-sizing:border-box"></div>
<div class="t g ct" style="left:340px;top:532px">EURUSD,H1</div>
<div class="t g ct" style="left:432px;top:532px">GBPUSD,H1</div>
<div class="t g ct" style="left:525px;top:532px">EURGBP,H1</div>
<div class="t g ct" style="left:616px;top:532px">USDJPY,H1</div>
<div class="t g ct" style="left:704px;top:532px">GBPAUD,H1</div>
<div class="t ct" style="left:796px;top:532px;color:#222">GBPCAD,H1</div>
<div class="t g cm" style="left:888px;top:532px">AUDCAD,M15</div>
<div class="t g cm" style="left:991px;top:532px">AUDNZD,M15</div>
<div class="t g cm" style="left:1096px;top:532px">NZDCAD,M15</div>
<svg class="a" style="left:322px;top:528px" width="1589" height="24"><path d="M98.500 5V20M190.500 5V20M282.500 5V20M370.500 5V20M659.500 5V20M762.500 5V20M866.500 5V20" stroke="#888"/><path d="M1561 8v7l-4-3.500zM1575 8v7l4-3.500z" fill="#999"/></svg>

<!-- orders -->
<div class="a" style="left:0;top:556px;width:1911px;height:2px;background:#a8a8a8"></div>
<div class="a" style="left:0;top:570px;width:10px;height:365px;background:#a9c4e0"></div>
<div class="a" style="left:-4px;top:556px;font:bold 11px/12px 'Liberation Sans',sans-serif">X</div>
<div id="ordw">
<table id="ord"><colgroup><col style="width:150px"><col style="width:210px"><col style="width:106px"><col style="width:80px"><col style="width:105px"><col style="width:116px"><col style="width:115px"><col style="width:117px"><col style="width:115px"><col style="width:116px"><col style="width:116px"><col style="width:175px"><col style="width:358px"></colgroup>
<tr><th>Order</th><th>Time</th><th>Type</th><th>Size</th><th style="padding-right:26px">Symbol</th><th>Price</th><th>S / L</th><th>T / P</th><th>Price</th><th>Commission</th><th>Swap</th><th>Profit</th><th>Comment</th></tr>
<tr><td><svg><use href="#db"/></svg>33346291</td><td>2021.09.26 21:12:31</td><td>buy</td><td>0.03</td><td>gbpaud</td><td>1.88309</td><td>1.83309</td><td>0.00000</td><td>1.87578</td><td>-0.21</td><td>0.00</td><td class="p">-15.98<i>X</i></td><td>Unstoppable Buy 2</td></tr>
<tr><td><svg><use href="#db"/></svg>33346557</td><td>2021.09.26 21:18:51</td><td>buy</td><td>0.05</td><td>gbpaud</td><td>1.88241</td><td>1.83241</td><td>0.00000</td><td>1.87578</td><td>-0.35</td><td>0.00</td><td class="p">-24.15<i>X</i></td><td>Unstoppable Buy 2</td></tr>
<tr><td><svg><use href="#db"/></svg>33346558</td><td>2021.09.26 21:18:51</td><td>buy</td><td>0.05</td><td>gbpaud</td><td>1.88241</td><td>1.83241</td><td>0.00000</td><td>1.87578</td><td>-0.35</td><td>0.00</td><td class="p">-24.15<i>X</i></td><td>Unstoppable Buy 2</td></tr>
<tr><td><svg><use href="#db"/></svg>33350346</td><td>2021.09.26 23:12:00</td><td>buy</td><td>0.08</td><td>gbpaud</td><td>1.88129</td><td>1.83129</td><td>0.00000</td><td>1.87578</td><td>-0.56</td><td>0.00</td><td class="p">-32.12<i>X</i></td><td>Unstoppable Buy 2</td></tr>
<tr><td><svg><use href="#db"/></svg>33350348</td><td>2021.09.26 23:12:00</td><td>buy</td><td>0.08</td><td>gbpaud</td><td>1.88129</td><td>1.83129</td><td>0.00000</td><td>1.87578</td><td>-0.56</td><td>0.00</td><td class="p">-32.12<i>X</i></td><td>Unstoppable Buy 2</td></tr>
<tr><td><svg><use href="#db"/></svg>33286534</td><td>2021.09.24 13:50:57</td><td>buy</td><td>0.01</td><td>gbpcad</td><td>1.73701</td><td>0.00000</td><td>0.00000</td><td>1.72592</td><td>-0.07</td><td>-0.03</td><td class="p">-8.79<i>X</i></td><td>Unstoppable Buy 1</td></tr>
<tr><td><svg><use href="#db"/></svg>33289296</td><td>2021.09.24 14:03:03</td><td>buy</td><td>0.02</td><td>gbpcad</td><td>1.73615</td><td>1.68615</td><td>0.00000</td><td>1.72592</td><td>-0.14</td><td>-0.05</td><td class="p">-16.20<i>X</i></td><td>Unstoppable Buy 2</td></tr>
<tr><td><svg><use href="#db"/></svg>33299228</td><td>2021.09.24 15:03:18</td><td>buy</td><td>0.03</td><td>gbpcad</td><td>1.73536</td><td>1.68536</td><td>0.00000</td><td>1.72592</td><td>-0.21</td><td>-0.07</td><td class="p">-22.43<i>X</i></td><td>Unstoppable Buy 2</td></tr>
<tr><td><svg><use href="#db"/></svg>33305808</td><td>2021.09.24 16:06:04</td><td>buy</td><td>0.05</td><td>gbpcad</td><td>1.73347</td><td>1.68347</td><td>0.00000</td><td>1.72592</td><td>-0.35</td><td>-0.12</td><td class="p">-29.89<i>X</i></td><td>Unstoppable Buy 2</td></tr>
<tr><td><svg><use href="#db"/></svg>33346505</td><td>2021.09.26 21:16:34</td><td>buy</td><td>0.08</td><td>gbpcad</td><td>1.72913</td><td>1.67913</td><td>0.00000</td><td>1.72592</td><td>-0.56</td><td>0.00</td><td class="p">-20.34<i>X</i></td><td>Unstoppable Buy 2</td></tr>
<tr><td><svg><use href="#dr"/></svg>33347218</td><td>2021.09.26 21:39:03</td><td>sell</td><td>0.01</td><td>gbpcad</td><td>1.72958</td><td>0.00000</td><td>0.00000</td><td>1.72603</td><td>-0.07</td><td>0.00</td><td class="p">2.81<i>X</i></td><td>Unstoppable Sell 1</td></tr>
<tr><td><svg><use href="#dr"/></svg>33347219</td><td>2021.09.26 21:39:03</td><td>sell</td><td>0.01</td><td>gbpcad</td><td>1.72958</td><td>0.00000</td><td>0.00000</td><td>1.72603</td><td>-0.07</td><td>0.00</td><td class="p">2.81<i>X</i></td><td>Unstoppable Sell 1</td></tr>
<tr><td><svg><use href="#db"/></svg>33353482</td><td>2021.09.27 00:05:15</td><td>buy</td><td>0.12</td><td>gbpcad</td><td>1.72833</td><td>1.67833</td><td>0.00000</td><td>1.72592</td><td>-0.84</td><td>0.00</td><td class="p">-22.90<i>X</i></td><td>Unstoppable Buy 2</td></tr>
<tr><td><svg><use href="#db"/></svg>33353484</td><td>2021.09.27 00:05:16</td><td>buy</td><td>0.12</td><td>gbpcad</td><td>1.72833</td><td>1.67833</td><td>0.00000</td><td>1.72592</td><td>-0.84</td><td>0.00</td><td class="p">-22.90<i>X</i></td><td>Unstoppable Buy 2</td></tr>
<tr><td><svg><use href="#db"/></svg>33369133</td><td>2021.09.27 02:39:39</td><td>buy</td><td>0.01</td><td>gbpusd</td><td>1.36682</td><td>0.00000</td><td>0.00000</td><td>1.36683</td><td>-0.07</td><td>0.00</td><td class="p">0.01<i>X</i></td><td>Unstoppable Buy 1</td></tr>
<tr><td><svg><use href="#db"/></svg>33369135</td><td>2021.09.27 02:39:39</td><td>buy</td><td>0.01</td><td>gbpusd</td><td>1.36682</td><td>0.00000</td><td>0.00000</td><td>1.36683</td><td>-0.07</td><td>0.00</td><td class="p">0.01<i>X</i></td><td>Unstoppable Buy 1</td></tr>
<tr><td></td><td></td><td></td><td></td><td></td><td></td><td></td><td></td><td></td><td></td><td></td><td></td><td></td></tr>
</table>
</div>
<div class="a" style="left:641px;top:560px;font-size:10px;color:#777">&#8260;</div>
<div class="a" style="left:1889px;top:558px;width:19px;height:377px;background:#f6f6f6"></div>
<div class="sb" style="left:1889px;top:558px;width:19px;height:19px"><svg><use href="#cu"/></svg></div>
<div class="th" style="left:1889px;top:732px;width:19px;height:116px"></div>
<div class="a" style="left:1895px;top:787px;width:7px;height:5px;border-top:1px solid #666;border-bottom:1px solid #666"></div>
<div class="sb" style="left:1889px;top:917px;width:19px;height:14px"><svg><use href="#cd"/></svg></div>
<svg class="a" style="left:0;top:590px;pointer-events:none" width="900" height="310"><rect x="428" y="10" width="376" height="91" rx="18" fill="none" stroke="#ffff00" stroke-width="4"/><rect x="420" y="250" width="412" height="49" rx="16" fill="none" stroke="#ffff00" stroke-width="4"/></svg>

<!-- bottom tabs -->
<div class="a" style="left:0;top:935px;width:1911px;height:26px;background:#f0f0f0;border-top:1px solid #111;box-sizing:border-box"></div>
<div class="a" style="left:0;top:961px;width:1911px;height:2px;background:#a8a8a8"></div>
<div class="a" style="left:-3px;top:962px;transform:rotate(-90deg);transform-origin:0 0;font-size:13px;line-height:12px;color:#222;width:60px;height:12px">Terminal</div>
<div class="a" style="left:12px;top:935px;width:56px;height:23px;background:#fff;border-right:1px solid #111;border-bottom:1px solid #111;border-top:1px solid #111;box-sizing:border-box"></div>
<div class="t" style="left:23px;top:939px">Trade</div>
<div class="t g" style="left:79px;top:939px">Exposure</div>
<div class="t g" style="left:155px;top:939px">Account History</div>
<div class="t g" style="left:268px;top:939px">News<span style="font:bold 9px 'Liberation Sans',sans-serif;color:#e01010;position:relative;top:4px;margin-left:2px">12</span></div>
<div class="t g" style="left:336px;top:939px">Alerts</div>
<div class="t g" style="left:391px;top:939px">Mailbox</div>
<div class="t g" style="left:460px;top:939px">Market<span style="font:bold 9px 'Liberation Sans',sans-serif;color:#e01010;position:relative;top:4px;margin-left:2px">97</span></div>
<div class="t g" style="left:537px;top:939px">Signals</div>
<div class="t g" style="left:600px;top:939px">Articles</div>
<div class="t g" style="left:664px;top:939px">Code Base</div>
<div class="t g" style="left:748px;top:939px">Experts</div>
<div class="t g" style="left:813px;top:939px">Journal</div>
<svg class="a" style="left:0;top:935px" width="900" height="26"><path d="M144.500 6V21M258.500 6V21M325.500 6V21M380.500 6V21M450.500 6V21M527.500 6V21M591.500 6V21M654.500 6V21M737.500 6V21M803.500 6V21M867.500 6V21" stroke="#888"/></svg>
</body></html>
